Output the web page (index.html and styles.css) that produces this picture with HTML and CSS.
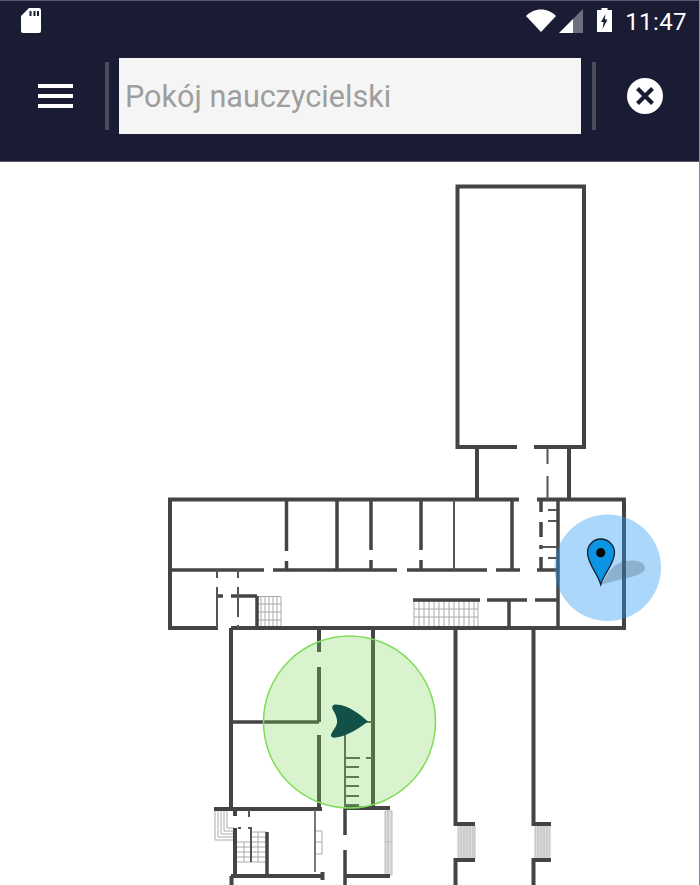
FILE: index.html
```html
<!DOCTYPE html>
<html lang="pl">
<head>
<meta charset="utf-8">
<title>Plan szkoły</title>
<link rel="stylesheet" href="styles.css">
</head>
<body>
<div class="screen">
  <header class="appbar">
    <div class="statusbar">
      <svg class="ic-sd" width="20" height="25" viewBox="0 0 20 25"><path fill="#fff" fill-rule="evenodd" d="M8 0H18a2 2 0 0 1 2 2V23a2 2 0 0 1-2 2H2a2 2 0 0 1-2-2V8ZM8.500 3V8H10.500V3ZM12.500 3V8H14.500V3ZM16 3V8H18V3Z"/></svg>
      <div class="status-right">
        <svg class="ic-wifi" width="30" height="23" viewBox="0 0 30 23"><path fill="#fff" d="M0 7C4 3 9 .5 15 .5S26 3 30 7L15 23Z"/></svg>
        <svg class="ic-signal" width="24" height="24" viewBox="0 0 24 24"><path fill="#6b6f80" d="M24 0V24H13V11Z"/><path fill="#fff" d="M14 10V24H0Z"/></svg>
        <svg class="ic-batt" width="15" height="24" viewBox="0 0 15 24"><path fill="#fff" fill-rule="evenodd" d="M4.500 0H10.500V2H15V24H0V2H4.500ZM8.500 6L4 14H6.700L5.500 21L10.500 11.500H7.800Z"/></svg>
        <span class="clock">11:47</span>
      </div>
    </div>
    <div class="toolbar">
      <button class="menu-btn" aria-label="Menu"><span></span><span></span><span></span></button>
      <i class="sep sep-left"></i>
      <div class="search">Pokój nauczycielski</div>
      <i class="sep sep-right"></i>
      <svg class="ic-close" width="36" height="36" viewBox="0 0 36 36"><circle cx="18" cy="18" r="18" fill="#fff"/><path stroke="#1a1c33" stroke-width="4.200" fill="none" d="M10.500 10.500L25.500 25.500M25.500 10.500L10.500 25.500"/></svg>
    </div>
  </header>
  <svg class="map" width="700" height="723" viewBox="0 162 700 723">
    <!-- stairs -->
    <g class="stair">
      <path d="M257 596.500H281V628H257ZM257 604H281M257 612H281M257 620H281M261 597V628M265 597V628M269 597V628M273 597V628M277 597V628"/>
      <path d="M414 601H478V628H414ZM414 609H478M414 617H478M419 601V628M424 601V628M429 601V628M434 601V628M439 601V628M444 601V628M449 601V628M454 601V628M459 601V628M464 601V628M469 601V628M474 601V628"/>
      <path d="M215 809V840H234M218 809V837H234M221 809V834H234M224 809V831H234M227 809V828H234"/>
      <path d="M237 842H251M237 847H251M237 852H251M237 857H251M237 862H267M251 832H267M251 837H267M251 842H267M251 847H267M251 852H267M251 857H267M244 842V862M258 832V862"/>
      <path d="M315 831H322V854H315ZM315 842H322"/>
    </g>
    <g class="stair-dense">
      <path d="M458 825H475V859H458ZM461 825V859M464 825V859M467 825V859M470 825V859M473 825V859"/>
      <path d="M535 825H550V859H535ZM538 825V859M541 825V859M544 825V859M547 825V859"/>
      <path d="M385 811H392V875H385ZM388 811V875M385 842H392"/>
    </g>
    <!-- thick walls -->
    <path class="wall" d="M517 447H457.500V186.500H584V447H534M477 447V499M569 447V499M519 499.500H170V628H218M537 499.500H624V628H231M231 628V808M214 809H322M231 876H321M319 629V652M319 667V722M319 735V808M373 629V808M345 808H390M345 876H390M455.500 629V824H475M455.500 885V860H475M533.500 629V824H551M533.500 885V860H551M235 809V816M235 828V876M231.500 876V885M322.500 872V880"/>
    <path class="wall-mid" d="M232 722H319M170 570H264M273 570H397M407 570H487M496 570H520M537 570H557M286.500 500V551M286.500 561V570M337 500V570M371 500V550M371 560V570M421 500V550M421 560V570M512 500V570M558 500V628M413 600H480M487 600H527M535 600H557M509 600V628M257 596V628M231 596H257M217 596H223M267 832V876M345 808V835M345 850V885M541 500V512M541 522V537M541 545V549M541 557V570"/>
    <path class="wall-thin" d="M217 570V578M217 587V628M238 570V578M238 587V617M238 625V628M454 500V570M547.500 448V464M547.500 476V499M548 510H557M548 521H557M541 547H557M548 558H557M249 810V817M248 828H252M251 828V862M238 828H241"/>
    <path class="wall-grey" d="M315 810V872"/>
    <!-- stairs on second block -->
    <path class="wall-thin" d="M345 722V808M345 758H360M345 767H359M345 777H359M345 786H359M345 796H359M345 805H359M366 758H373M366 722H373"/>
    <!-- blue location -->
    <circle class="blue-zone" cx="607.700" cy="567.700" r="53.300"/>
    <path class="pin-shadow" d="M601 585C607 574 613 563 626 561C636 559 645 562 645 568C645 573 636 576 627 578C617 580 607 583 601 585Z"/>
    <path class="pin" d="M600.700 584.500C598 574 587.500 564 587.500 552.500C587.500 545 593.500 539 600.700 539C608 539 614.500 545 614.500 552.500C614.500 564 603.500 574 600.700 584.500Z"/>
    <circle cx="600.700" cy="552.700" r="4.600" fill="#050505"/>
    <!-- green position -->
    <circle class="green-zone" cx="349.500" cy="722" r="86"/>
    <path class="arrow" d="M368 721.500C360 714 348 705 336 704.500C332 704.500 331.500 707 333 710C336 715 337.500 719 337 723C336 728 332 731 331 735C330.500 737 333 738 336 737.500C347 736 358 729 368 721.500Z"/>
  </svg>
</div>
</body>
</html>
```
FILE: styles.css
```css
* { box-sizing: border-box; }
html, body { margin: 0; padding: 0; background: #fff; }
.screen { width: 700px; height: 885px; overflow: hidden; position: relative; border-right: 1px solid #8d8d95; }
.appbar { width: 700px; height: 162px; background: #1a1c33; border-top: 1px solid #55576a; border-bottom: 1px solid #55576a; display: flex; flex-direction: column; }
.statusbar { height: 57px; padding: 7px 13px 0 21px; display: flex; justify-content: space-between; align-items: flex-start; }
.status-right { display: flex; align-items: flex-start; }
.ic-wifi { margin-top: 1px; }
.ic-signal { margin: 1px 0 0 3px; }
.ic-batt { margin: 0 0 0 14px; }
.clock { margin-left: 13px; padding-top: 1px; font: 24px/27px Roboto, sans-serif; color: #fff; letter-spacing: .4px; }
.toolbar { height: 76px; display: flex; align-items: center; padding-left: 38px; }
.menu-btn { width: 35px; height: 24px; margin: 0; padding: 0; border: 0; background: none; display: flex; flex-direction: column; justify-content: space-between; }
.menu-btn span { display: block; height: 4px; background: #fff; }
.sep { display: block; width: 4px; height: 68px; background: #4a4c5c; }
.sep-left { margin-left: 32px; }
.search { width: 462px; height: 76px; margin-left: 10px; padding-left: 6px; background: #f5f5f5; font: 30.600px/78px Roboto, sans-serif; color: #9e9e9e; }
.sep-right { margin-left: 11px; }
.ic-close { margin-left: 31px; }
.map { display: block; }
.map path { fill: none; }
.map .wall { stroke: #444; stroke-width: 4; }
.map .wall-mid { stroke: #444; stroke-width: 3.500; }
.map .wall-thin { stroke: #555; stroke-width: 2; }
.map .wall-grey { stroke: #777; stroke-width: 2; }
.map .stair path { stroke: #aaa; stroke-width: 1; }
.map .stair-dense path { stroke: #bbb; stroke-width: 1; fill: #ddd; }
.blue-zone { fill: rgba(33, 150, 243, .38); }
.map .pin-shadow { fill: rgba(70, 90, 110, .3); }
.map .pin { fill: #0b93e4; stroke: #14202c; stroke-width: 1.300; }
.green-zone { fill: rgba(125, 215, 85, .29); stroke: #7edc58; stroke-width: 1.500; }
.map .arrow { fill: #115147; }
```
